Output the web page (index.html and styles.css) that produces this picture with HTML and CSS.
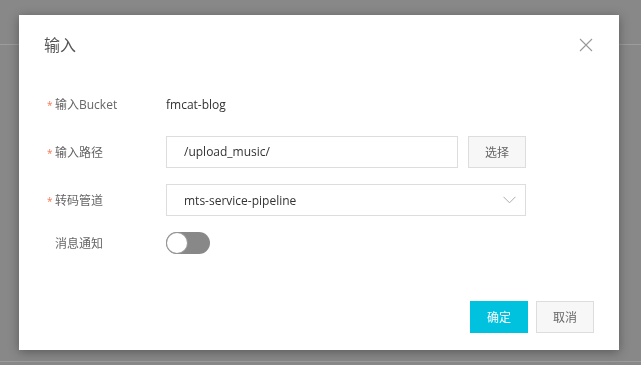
FILE: index.html
```html
<!DOCTYPE html>
<html lang="zh-CN">
<head>
    <meta charset="UTF-8">
    <title>输入</title>
    <link rel="stylesheet" href="styles.css">
</head>
<body>
    <div class="page">
        <div class="page-header"></div>
        <div class="page-footer"></div>
    </div>

    <div class="overlay">
        <div class="modal">
            <div class="modal-header">
                <div class="modal-title">输入</div>
                <svg class="modal-close" width="14" height="14" viewBox="0 0 14 14">
                    <path d="M1 1 L13 13 M13 1 L1 13" stroke="#999" stroke-width="1.1" fill="none"/>
                </svg>
            </div>

            <div class="modal-body">
                <div class="form-row required">
                    <div class="form-label">输入Bucket</div>
                    <div class="form-control">
                        <span class="form-text">fmcat-blog</span>
                    </div>
                </div>
                <div class="form-row required">
                    <div class="form-label">输入路径</div>
                    <div class="form-control">
                        <div class="input">/upload_music/</div>
                        <button class="btn btn-light">选择</button>
                    </div>
                </div>
                <div class="form-row required">
                    <div class="form-label">转码管道</div>
                    <div class="form-control">
                        <div class="select">
                            <span>mts-service-pipeline</span>
                            <svg width="13" height="8" viewBox="0 0 13 8">
                                <path d="M0.5 0.8 L6.5 6.8 L12.5 0.8" stroke="#aaa" stroke-width="1" fill="none"/>
                            </svg>
                        </div>
                    </div>
                </div>
                <div class="form-row row-switch">
                    <div class="form-label">消息通知</div>
                    <div class="form-control">
                        <div class="switch"><div class="switch-knob"></div></div>
                    </div>
                </div>
            </div>

            <div class="modal-footer">
                <button class="btn btn-primary">确定</button>
                <button class="btn btn-light">取消</button>
            </div>
        </div>
    </div>
</body>
</html>
```

FILE: styles.css
```css
* {
    margin: 0;
    padding: 0;
    box-sizing: border-box;
}

body {
    background: #888;
    font-family: 'Open Sans', 'Noto Sans CJK SC', sans-serif;
    font-size: 12px;
    color: #333;
    height: 100vh;
    overflow: hidden;
}

.page-header {
    height: 45px;
    border-bottom: 1px solid #9c9c9c;
}

.page-footer {
    margin-top: 316px;
    border-top: 1px solid #9c9c9c;
}

.overlay {
    position: fixed;
    top: 0;
    left: 0;
    width: 100%;
    height: 100%;
    display: flex;
    justify-content: center;
    align-items: center;
    padding-right: 3px;
}

.modal {
    width: 600px;
    height: 335px;
    background: #fff;
    box-shadow: 0 2px 10px rgba(0, 0, 0, 0.35);
    display: flex;
    flex-direction: column;
}

.modal-header {
    display: flex;
    justify-content: space-between;
    align-items: center;
    padding: 18px 26px 0 25px;
    height: 42px;
}

.modal-title {
    font-size: 16px;
    line-height: 24px;
    color: #555;
}

.modal-body {
    padding: 31px 25px 0 28px;
    display: flex;
    flex-direction: column;
    gap: 16px;
}

.form-row {
    display: flex;
    align-items: center;
    height: 32px;
}

.form-row.row-switch {
    height: 22px;
}

.form-label {
    width: 119px;
    padding-left: 8px;
    color: #666;
}

.required .form-label::before {
    content: '*';
    display: inline-block;
    width: 8px;
    margin-left: -8px;
    font-size: 10px;
    color: #f7764f;
}

.form-control {
    display: flex;
    align-items: center;
    gap: 10px;
}

.form-text {
    color: #333;
}

.input {
    width: 292px;
    height: 32px;
    border: 1px solid #ddd;
    padding-left: 17px;
    line-height: 30px;
    color: #333;
}

.select {
    width: 360px;
    height: 32px;
    border: 1px solid #ddd;
    padding: 0 9px 0 17px;
    display: flex;
    justify-content: space-between;
    align-items: center;
    color: #333;
}

.btn {
    width: 58px;
    height: 32px;
    border: 1px solid #ddd;
    font-family: inherit;
    font-size: 12px;
    cursor: pointer;
}

.btn-light {
    background: #f7f7f7;
    color: #666;
}

.btn-primary {
    background: #00c1de;
    border-color: #00c1de;
    color: #fff;
}

.switch {
    width: 44px;
    height: 22px;
    border-radius: 11px;
    background: #888;
    padding: 1px;
}

.switch-knob {
    width: 20px;
    height: 20px;
    border-radius: 50%;
    background: #fff;
    box-shadow: 0 0 0 1px #999;
}

.modal-footer {
    margin-top: 47px;
    padding-right: 25px;
    display: flex;
    justify-content: flex-end;
    gap: 8px;
}
```
